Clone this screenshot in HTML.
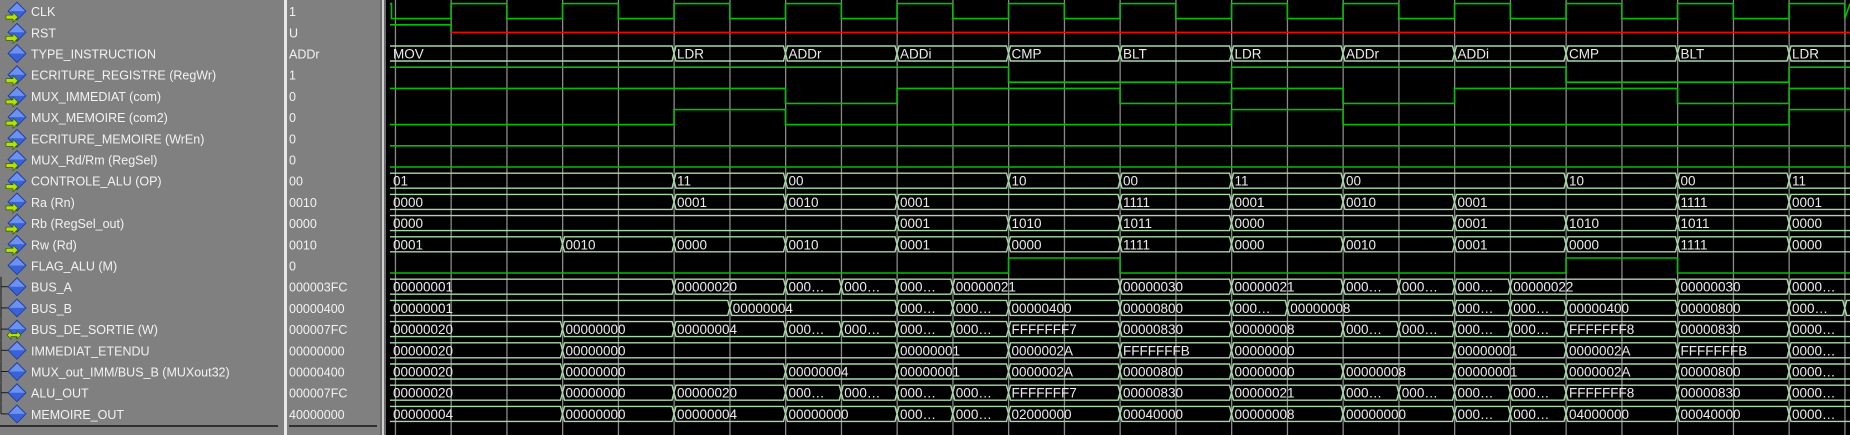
<!DOCTYPE html>
<html><head><meta charset="utf-8">
<style>
html,body{margin:0;padding:0;background:#000;}
body{width:1850px;height:435px;overflow:hidden;position:relative;font-family:"Liberation Sans",sans-serif;}
#left{position:absolute;left:0;top:0;width:386px;height:435px;background:#808080;}
svg{position:absolute;left:0;top:0;}
</style></head><body>
<div id="left"></div>
<svg id="s" width="1850" height="435" xmlns="http://www.w3.org/2000/svg"></svg>
<script>
var s=document.getElementById('s');
var h='';
function E(n){return 451+55.75*n;}
function T(i){return 3.6+21.2*i;}
// left panel separators
h+='<rect x="284" y="0" width="3" height="435" fill="#e8e8e8"/>';
h+='<rect x="380" y="0" width="6" height="435" fill="#6a6a6a"/>';
h+='<rect x="382" y="0" width="2" height="435" fill="#d0d0d0"/>';
h+='<rect x="386" y="0" width="1464" height="435" fill="#000"/>';
h+='<rect x="0" y="425" width="278" height="2" fill="#303030"/>';
h+='<rect x="289" y="425" width="88" height="2" fill="#303030"/>';
// grid
for(var n=-1;n<=25;n++){h+='<rect x="'+(E(n)-0.5).toFixed(1)+'" y="0" width="1.3" height="435" fill="#8a8a8a"/>';}
var names=["CLK","RST","TYPE_INSTRUCTION","ECRITURE_REGISTRE (RegWr)","MUX_IMMEDIAT (com)","MUX_MEMOIRE (com2)","ECRITURE_MEMOIRE (WrEn)","MUX_Rd/Rm (RegSel)","CONTROLE_ALU (OP)","Ra (Rn)","Rb (RegSel_out)","Rw (Rd)","FLAG_ALU (M)","BUS_A","BUS_B","BUS_DE_SORTIE (W)","IMMEDIAT_ETENDU","MUX_out_IMM/BUS_B (MUXout32)","ALU_OUT","MEMOIRE_OUT"];
var vals=["1","U","ADDr","1","0","0","0","0","00","0010","0000","0010","0","000003FC","00000400","000007FC","00000000","00000400","000007FC","40000000"];
var arrow=[1,1,0,1,1,1,1,1,1,1,1,1,0,0,0,2,0,0,0,0];
for(var i=0;i<20;i++){
  var cy=T(i)+7.5;
  if(i>=13){h+='<line x1="1" y1="'+cy+'" x2="9" y2="'+cy+'" stroke="#1a1a1a" stroke-width="1"/><line x1="1" y1="'+(cy-10)+'" x2="1" y2="'+(i==19?cy:cy+11)+'" stroke="#1a1a1a" stroke-width="1"/>';}
  var dx=17;
  h+='<polygon points="'+dx+','+(cy-9)+' '+(dx+9)+','+cy+' '+dx+','+(cy+9)+' '+(dx-9)+','+cy+'" fill="#3a62d8" stroke="#1c3a9a" stroke-width="0.8"/>';
  h+='<polygon points="'+dx+','+(cy-8)+' '+(dx+8)+','+cy+' '+dx+','+cy+' '+(dx-8)+','+cy+'" fill="#8fb0ff" opacity="0.6"/>';
  if(arrow[i]==1){h+='<path d="M'+(dx-11)+' '+(cy+4)+' h7 v-3 l5 5 l-5 5 v-3 h-7z" fill="#b8e000" stroke="#2a6000" stroke-width="0.7"/>';}
  if(arrow[i]==2){h+='<path d="M'+(dx-10)+' '+(cy+6)+' l4 -4 v2.5 h6 v-2.5 l4 4 l-4 4 v-2.5 h-6 v2.5z" fill="#b8e000" stroke="#2a6000" stroke-width="0.7"/>';}
  h+='<text x="31" y="'+(T(i)+12.5)+'" font-size="12.5" fill="#f2f2f2">'+names[i]+'</text>';
  h+='<text x="289" y="'+(T(i)+12.5)+'" font-size="12.5" fill="#f2f2f2">'+vals[i]+'</text>';
}
var G='#00c000',P='#a8d8a8';
var X0=390,X1=1850;
function bit(i,segs){ // segs: [[startN, val]]
  var t=T(i),b=t+15,p='';
  for(var k=0;k<segs.length;k++){
    var x0=k==0?X0:E(segs[k][0]);var x1=k+1<segs.length?E(segs[k+1][0]):X1;
    var y=segs[k][1]?t:b;
    p+=(k==0?'M':'L')+x0.toFixed(1)+' '+y+' L'+x1.toFixed(1)+' '+y+' ';
  }
  h+='<path d="'+p+'" fill="none" stroke="'+G+'" stroke-width="1.6"/>';
}
function bus(i,segs){
  var t=T(i),b=t+15,m=t+7.5;
  for(var k=0;k<segs.length;k++){
    var x0=k==0?X0:E(segs[k][0]);var x1=k+1<segs.length?E(segs[k+1][0]):X1+5;
    var a=k==0?x0:x0+2;
    h+='<polyline points="'+(k==0?a:x0)+','+(k==0?t:m)+' '+a+','+t+' '+(x1-2)+','+t+' '+x1+','+m+' '+(x1-2)+','+b+' '+a+','+b+' '+(k==0?a:x0)+','+(k==0?b:m)+'" fill="none" stroke="'+P+'" stroke-width="1.4"/>';
    h+='<text x="'+(x0+3).toFixed(1)+'" y="'+(t+12.5)+'" font-size="13.5" fill="#ececec">'+segs[k][1]+'</text>';
  }
}
// CLK
var c=[[-1,0]];for(var n=0;n<=25;n++)c.push([n,n%2==0?1:0]);
(function(){var t=T(0),b=t+15;var p='M390 '+t+' L391.5 '+t+' L391.5 '+b;for(var n=0;n<=25;n++){var y=n%2==0?t:b;p+=' L'+E(n).toFixed(1)+' '+(n%2==0?b:t)+' L'+E(n).toFixed(1)+' '+y;}p+=' L1850 '+t;h+='<path d="'+p+'" fill="none" stroke="'+G+'" stroke-width="1.6"/>';})();
// RST
h+='<path d="M390 '+T(1)+' L'+E(0)+' '+T(1)+' L'+E(0)+' '+(T(1)+7.5)+'" fill="none" stroke="'+G+'" stroke-width="1.6"/>';
h+='<line x1="'+E(0)+'" y1="'+(T(1)+7.5)+'" x2="1850" y2="'+(T(1)+7.5)+'" stroke="#ff0000" stroke-width="1.4"/>';
bus(2,[[-1,'MOV'],[4,'LDR'],[6,'ADDr'],[8,'ADDi'],[10,'CMP'],[12,'BLT'],[14,'LDR'],[16,'ADDr'],[18,'ADDi'],[20,'CMP'],[22,'BLT'],[24,'LDR']]);
bit(3,[[-1,1],[10,0],[14,1],[20,0],[24,1]]);
bit(4,[[-1,1],[6,0],[8,1],[12,0],[14,1],[16,0],[18,1],[22,0],[24,1]]);
bit(5,[[-1,0],[4,1],[6,0],[14,1],[16,0],[24,1]]);
bit(6,[[-1,0]]);
bit(7,[[-1,0]]);
bus(8,[[-1,'01'],[4,'11'],[6,'00'],[10,'10'],[12,'00'],[14,'11'],[16,'00'],[20,'10'],[22,'00'],[24,'11']]);
bus(9,[[-1,'0000'],[4,'0001'],[6,'0010'],[8,'0001'],[12,'1111'],[14,'0001'],[16,'0010'],[18,'0001'],[22,'1111'],[24,'0001']]);
bus(10,[[-1,'0000'],[8,'0001'],[10,'1010'],[12,'1011'],[14,'0000'],[18,'0001'],[20,'1010'],[22,'1011'],[24,'0000']]);
bus(11,[[-1,'0001'],[2,'0010'],[4,'0000'],[6,'0010'],[8,'0001'],[10,'0000'],[12,'1111'],[14,'0000'],[16,'0010'],[18,'0001'],[20,'0000'],[22,'1111'],[24,'0000']]);
bit(12,[[-1,0],[10,1],[12,0],[20,1],[22,0]]);
var D='000\u2026',D4='0000\u2026';
bus(13,[[-1,'00000001'],[4,'00000020'],[6,D],[7,D],[8,D],[9,'00000021'],[12,'00000030'],[14,'00000021'],[16,D],[17,D],[18,D],[19,'00000022'],[22,'00000030'],[24,D4]]);
bus(14,[[-1,'00000001'],[5,'00000004'],[8,D],[9,D],[10,'00000400'],[12,'00000800'],[14,D],[15,'00000008'],[18,D],[19,D],[20,'00000400'],[22,'00000800'],[24,D],[25,'']]);
bus(15,[[-1,'00000020'],[2,'00000000'],[4,'00000004'],[6,D],[7,D],[8,D],[9,D],[10,'FFFFFFF7'],[12,'00000830'],[14,'00000008'],[16,D],[17,D],[18,D],[19,D],[20,'FFFFFFF8'],[22,'00000830'],[24,D4]]);
bus(16,[[-1,'00000020'],[2,'00000000'],[8,'00000001'],[10,'0000002A'],[12,'FFFFFFFB'],[14,'00000000'],[18,'00000001'],[20,'0000002A'],[22,'FFFFFFFB'],[24,D4]]);
bus(17,[[-1,'00000020'],[2,'00000000'],[6,'00000004'],[8,'00000001'],[10,'0000002A'],[12,'00000800'],[14,'00000000'],[16,'00000008'],[18,'00000001'],[20,'0000002A'],[22,'00000800'],[24,D4]]);
bus(18,[[-1,'00000020'],[2,'00000000'],[4,'00000020'],[6,D],[7,D],[8,D],[9,D],[10,'FFFFFFF7'],[12,'00000830'],[14,'00000021'],[16,D],[17,D],[18,D],[19,D],[20,'FFFFFFF8'],[22,'00000830'],[24,D4]]);
bus(19,[[-1,'00000004'],[2,'00000000'],[4,'00000004'],[6,'00000000'],[8,D],[9,D],[10,'02000000'],[12,'00040000'],[14,'00000008'],[16,'00000000'],[18,D],[19,D],[20,'04000000'],[22,'00040000'],[24,D4]]);
s.innerHTML=h;
</script>
</body></html>
